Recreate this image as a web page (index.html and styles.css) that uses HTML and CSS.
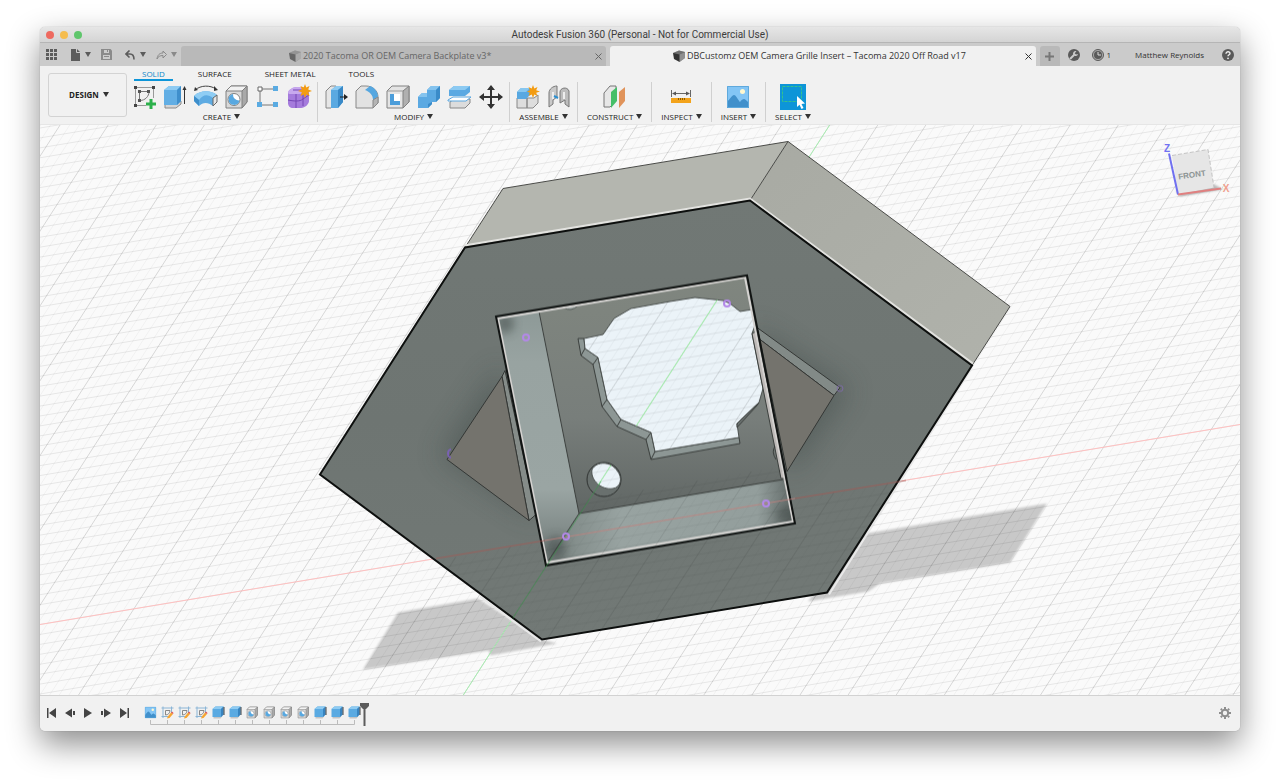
FILE: index.html
```
<!DOCTYPE html>
<html lang="en">
<head>
    <meta charset="UTF-8">
    <meta name="viewport" content="width=device-width, initial-scale=1.0">
    <title>Autodesk Fusion 360</title>
    <link rel="stylesheet" href="styles.css">
</head>
<body>
    <!-- shared icons -->
    <svg class="sprite" aria-hidden="true">
        <symbol id="i-extrude" viewBox="0 0 26 26">
            <path d="M3 20l5-3h11l0 3-5 4H3z" fill="#d5d5d5" stroke="#8a8a8a"/>
            <path d="M2 6l5-4h12v15l-4 4H2z" fill="#62aee4"/>
            <path d="M2 6l5-4h12l-4 4z" fill="#8ecbf2"/>
            <path d="M15 6l4-4v15l-4 4z" fill="#3f8fcc"/>
            <path d="M22.500 3v17" stroke="#333" fill="none"/>
            <path d="M20.500 6l2-4 2 4z" fill="#333"/>
        </symbol>
        <symbol id="i-solid" viewBox="0 0 26 26">
            <path d="M3 20h14l4-3v3l-4 5H3z" fill="#c4c4c4"/>
            <path d="M1 6l6-5h16v16l-5 5H1z" fill="#5aaae2"/>
            <path d="M1 6l6-5h16l-5 5z" fill="#8ecbf2"/>
            <path d="M18 6l5-5v16l-5 5z" fill="#3884c0"/>
            <path d="M24 2v16" stroke="#444" stroke-width="2"/>
        </symbol>
        <symbol id="i-hole" viewBox="0 0 26 26">
            <path d="M2 7l5-5h16v16l-5 6H2z" fill="#d9d9d9" stroke="#808080"/>
            <path d="M2 7l5-5h16l-5 5z" fill="#f2f2f2" stroke="#808080"/>
            <path d="M18 7l5-5v16l-5 6z" fill="#a9a9a9" stroke="#808080"/>
            <circle cx="10" cy="15.500" r="6" fill="#fff" stroke="#808080"/>
            <path d="M9 10a5.500 5.500 0 1 0 6.500 6.500A6 6 0 0 1 9 10z" fill="#58a8e0"/>
        </symbol>
        <symbol id="i-image" viewBox="0 0 26 26">
            <path d="M2 2h22v22H2z" fill="#83c5f5"/>
            <circle cx="17.500" cy="7.500" r="2.500" fill="#fff8d0"/>
            <path d="M2 18c3-3 5-7 7-7s4 5 6 7c1-2 3-3 4-3s3 2 5 4v5H2z" fill="#4190cb"/>
            <path d="M2.500 2.500h21v21h-21z" fill="none" stroke="#5fa9dc"/>
        </symbol>
        <symbol id="i-sketch" viewBox="0 0 26 26">
            <path d="M4 1v23M21 1v13M1 4h24M1 21h13" stroke="#8bb5d6" stroke-width="2" fill="none"/>
            <path d="M9 9h9c0 5-4 9-9 9z" fill="none" stroke="#888" stroke-width="2"/>
            <path d="M13 22l7-9 4 3-7 8-5 1z" fill="#f6a531"/>
            <path d="M20 13l2-2 3 3-1 2z" fill="#e04f4f"/>
        </symbol>
        <symbol id="i-cube" viewBox="0 0 12 12">
            <path d="M0 3l6-2.500L12 2v6l-5.500 4L1 9z" fill="currentColor"/>
            <path d="M0 3l6-2.500L12 2 6.500 4.500z" fill="#fff" opacity=".3"/>
            <path d="M6.500 4.500L12 2v6l-5.500 4z" fill="#fff" opacity=".45"/>
        </symbol>
    </svg>

    <div class="window">
        <header class="titlebar">
            <span class="light red"></span>
            <span class="light yellow"></span>
            <span class="light green"></span>
            <h1>Autodesk Fusion 360 (Personal - Not for Commercial Use)</h1>
        </header>

        <div class="appbar">
            <div class="quick">
                <button aria-label="Data panel"><svg width="11" height="11" viewBox="0 0 11 11" fill="#5c5c5c"><path d="M0 0h3v3H0zM4 0h3v3H4zM8 0h3v3H8zM0 4h3v3H0zM4 4h3v3H4zM8 4h3v3H8zM0 8h3v3H0zM4 8h3v3H4zM8 8h3v3H8z"/></svg></button>
                <button class="has-caret" aria-label="File"><svg width="11" height="12" viewBox="0 0 11 12"><path d="M1 0h6l3 3v9H1z" fill="#5c5c5c"/><path d="M6.500 0v3.500H10" fill="none" stroke="#cbcbcb"/></svg><i class="caret"></i></button>
                <button class="dim" aria-label="Save"><svg width="11" height="11" viewBox="0 0 11 11"><path d="M0 0h9.500L11 1.500V11H0z" fill="#8a8a8a"/><path d="M3 1h5v3H3zM2 6h7v4H2z" fill="#cbcbcb"/><path d="M6 1h1v2H6zM3 7h5v1H3z" fill="#8a8a8a"/></svg></button>
                <button class="has-caret" aria-label="Undo"><svg width="11" height="10" viewBox="0 0 11 10"><path d="M4.500.5L1 4l3.500 3.500M1 4h4c3 0 4 2 4 5.500" fill="none" stroke="#5c5c5c" stroke-width="1.600"/></svg><i class="caret"></i></button>
                <button class="has-caret dim" aria-label="Redo"><svg width="11" height="10" viewBox="0 0 11 10"><path d="M7 1v2C3.500 3 1.500 5 1 9c1-2.500 3-3.500 6-3.500V8l3.500-3.500z" fill="none" stroke="#8a8a8a"/></svg><i class="caret"></i></button>
            </div>
            <div class="doc-tab">
                <button class="doc-name"><svg width="12" height="12"><use href="#i-cube"/></svg>2020 Tacoma OR OEM Camera Backplate v3*</button>
                <button class="close" aria-label="Close"><svg width="7" height="7" viewBox="0 0 7 7"><path d="M.5.5l6 6M6.500.5l-6 6" stroke="currentColor"/></svg></button>
            </div>
            <div class="doc-tab active">
                <button class="doc-name"><svg width="12" height="12"><use href="#i-cube"/></svg>DBCustomz OEM Camera Grille Insert – Tacoma 2020 Off Road v17</button>
                <button class="close" aria-label="Close"><svg width="7" height="7" viewBox="0 0 7 7"><path d="M.5.5l6 6M6.500.5l-6 6" stroke="currentColor"/></svg></button>
            </div>
            <button class="new-tab" aria-label="New tab"><svg width="9" height="9" viewBox="0 0 9 9"><path d="M4.500 0v9M0 4.500h9" stroke="#777" stroke-width="2"/></svg></button>
            <div class="account">
                <button aria-label="Extensions"><svg width="12" height="12" viewBox="0 0 12 12"><circle cx="6" cy="6" r="6" fill="#5a5a5a"/><path d="M2 10l4-4" stroke="#cbcbcb" stroke-width="2"/><path d="M8.500 2.200A2.500 2.500 0 1 0 10 5L8 5.500 6.700 4.300z" fill="#cbcbcb"/></svg></button>
                <button class="jobs" aria-label="Job status"><svg width="12" height="12" viewBox="0 0 12 12"><circle cx="6" cy="6" r="5.500" fill="#aaa" stroke="#5a5a5a"/><circle cx="6" cy="6" r="4" fill="#5a5a5a"/><path d="M6 3v3h3" stroke="#ddd" fill="none"/></svg>1</button>
                <button class="user">Matthew Reynolds</button>
                <button aria-label="Help"><svg width="12" height="12" viewBox="0 0 12 12"><circle cx="6" cy="6" r="6" fill="#5a5a5a"/><path d="M4 4.700C4 2 8.200 2.200 8 4.600 7.900 5.800 6 5.800 6 7.300" stroke="#eee" stroke-width="1.400" fill="none"/><circle cx="6" cy="9.300" r=".9" fill="#eee"/></svg></button>
            </div>
        </div>

        <div class="ribbon">
            <button class="workspace">DESIGN <i class="caret"></i></button>
            <div class="ribbon-main">
                <nav class="ribbon-tabs">
                    <button class="current">SOLID</button>
                    <button>SURFACE</button>
                    <button>SHEET METAL</button>
                    <button>TOOLS</button>
                </nav>
                <div class="groups">
                    <div class="group">
                        <div class="tools">
                            <button aria-label="Create sketch"><svg viewBox="0 0 26 26"><path d="M4.500 3v19M3 3.500h19M22.500 3v11M3 21.500h12" stroke="#999" fill="none"/><path d="M3 2h3v3H3zM21 2h3v3h-3zM3 20h3v3H3z" fill="#444"/><path d="M8.500 7v10M8 7.500h10c0 5-4 9-9 9" stroke="#777" fill="none"/><path d="M7 6h3v3H7zM16 6h3v3h-3zM7 15h3v3H7z" fill="#555"/><path d="M20 15v10M15 20h10" stroke="#2cb04b" stroke-width="3"/></svg></button>
                            <button aria-label="Extrude"><svg viewBox="0 0 26 26"><use href="#i-extrude"/></svg></button>
                            <button aria-label="Revolve"><svg viewBox="0 0 26 26"><path d="M2 6c6-5 15-5 21-1" stroke="#444" fill="none"/><path d="M1 7l1-4 3 3zM21 2l4 4-4 1z" fill="#333"/><path d="M1 12c6-6 17-6 23-1l-4 11c-5-4-10-4-14 0l-5-5z" fill="#5eabe2"/><path d="M1 12c6-6 17-6 23-1l-4 3c-5-4-10-4-14 2z" fill="#8fcdf4"/><path d="M20 14l4-3v7l-4 4z" fill="#e5e5e5" stroke="#666"/><path d="M1 12l5 4v6l-5-5z" fill="#3d8ecb"/></svg></button>
                            <button aria-label="Hole"><svg viewBox="0 0 26 26"><use href="#i-hole"/></svg></button>
                            <button aria-label="Rectangular pattern"><svg viewBox="0 0 26 26"><path d="M5 7v12M7 5h12M7 21h12" stroke="#777" fill="none"/><path d="M3 3h4v4H3z" fill="#fff" stroke="#666"/><path d="M18 2h5v5h-5zM2 18h5v5H2zM18 18h5v5h-5z" fill="#5aabe2"/></svg></button>
                            <button aria-label="Create form"><svg viewBox="0 0 26 26"><path d="M2 9c0-3 5-6 9-6h7c3 1 5 3 5 6v8c0 3-4 7-8 7H7c-3 0-5-2-5-5z" fill="#a57bdc"/><path d="M2 9c0-3 5-6 9-6h7c3 1 4 2 3 4-2 2-5 3-8 3H6c-2 0-4 0-4-1z" fill="#c7a8ee"/><path d="M10 10v14M2 16c5 1 12 2 15-1l6-4M17 9v13M7 6h11" stroke="#7446b4" fill="none"/><path d="M19 0l1.300 3.500L23.500 2l-1.300 3.500L26 7l-3.700 1.300L23.500 12l-3.200-1.500L19 14l-1.300-3.500L14.500 12l1.300-3.700L12 7l3.800-1.500L14.500 2l3.200 1.500z" fill="#f39c12"/></svg></button>
                        </div>
                        <button class="group-name">CREATE <i class="caret"></i></button>
                    </div>
                    <div class="group">
                        <div class="tools">
                            <button aria-label="Press pull"><svg viewBox="0 0 26 26"><path d="M3 7l5-5h5v17l-5 5H3z" fill="#e6e6e6" stroke="#888"/><path d="M8 6l5-4h7v16l-5 6H8z" fill="#5aa9e1"/><path d="M8 6l5-4h7l-5 4z" fill="#8ecbf2"/><path d="M15 6l5-4v16l-5 6z" fill="#3989c7"/><path d="M17 13h6" stroke="#222"/><path d="M21 10l4 3-4 3z" fill="#222"/></svg></button>
                            <button aria-label="Fillet"><svg viewBox="0 0 26 26"><path d="M2 7l5-5h5c7 0 12 5 12 11v6l-5 5H2z" fill="#e2e2e2" stroke="#888"/><path d="M11 6l5-4c5 2 8 6 8 11l-5 3c0-5-3-8-8-10z" fill="#56a7e0"/><path d="M19 16l5-3v6l-5 5z" fill="#b5b5b5" stroke="#888"/></svg></button>
                            <button aria-label="Shell"><svg viewBox="0 0 26 26"><path d="M2 7l5-5h17v16l-6 6H2z" fill="#e4e4e4" stroke="#808080"/><path d="M18 7l6-5v16l-6 6z" fill="#b0b0b0" stroke="#808080"/><path d="M2 7h16" stroke="#999"/><path d="M5 10h10v11H5z" fill="#4b9dda"/><path d="M9 10h6v7H9z" fill="#fff"/></svg></button>
                            <button aria-label="Combine"><svg viewBox="0 0 26 26"><path d="M2 13l4-4h5V6l4-4h9v12l-4 4h-4v2l-4 4H2z" fill="#5ba9e2"/><path d="M11 6l4-4h9l-4 4zM2 13l4-4h5v4z" fill="#84c3ee"/><path d="M20 6l4-4v12l-4 4zM12 24l4-4v-2l-4 2z" fill="#3a8bc9"/></svg></button>
                            <button aria-label="Split body"><svg viewBox="0 0 26 26"><path d="M3 18l4-3h16v4l-5 5H3z" fill="#dcdcdc" stroke="#888"/><path d="M2 6l5-4h16v6l-5 4H2z" fill="#5ba9e2"/><path d="M2 6l5-4h16l-5 4z" fill="#8ccaf2"/><path d="M1 16l5-3h18l-5 4H1z" fill="#fff" stroke="#59a6df"/></svg></button>
                            <button aria-label="Move"><svg viewBox="0 0 26 26"><path d="M13 4v18M4 13h18" stroke="#333" stroke-width="2"/><path d="M13 1l4 5H9zM13 25l4-5H9zM1 13l5-4v8zM25 13l-5-4v8z" fill="#333"/></svg></button>
                        </div>
                        <button class="group-name">MODIFY <i class="caret"></i></button>
                    </div>
                    <div class="group">
                        <div class="tools">
                            <button aria-label="New component"><svg viewBox="0 0 26 26"><path d="M2 14h10v10H2zM12 14h7l4-3v8l-5 5h-6z" fill="#ddd" stroke="#888"/><path d="M2 8l4-4h9v7l-4 4H2z" fill="#58a8e1"/><path d="M2 8l4-4h9l-4 4z" fill="#87c7f0"/><path d="M18 1l1.300 3.500L22.500 3l-1.300 3.300L25 7.500l-3.800 1.300L22.500 12l-3.200-1.500L18 14l-1.300-3.500L13.500 12l1.300-3.200L12 7.500l2.800-1.200L13.500 3l3.200 1.500z" fill="#f39c12"/></svg></button>
                            <button aria-label="Joint"><svg viewBox="0 0 26 26"><path d="M3 9c0-4 4-7 8-7v11l-4 3v4l-4 3z" fill="#c9c9c9" stroke="#777"/><path d="M7 8v7" stroke="#eee" stroke-width="2"/><path d="M23 7v16l-4-3v-4l-5 3V8c0-4 7-6 9-1z" fill="#bdbdbd" stroke="#777"/><path d="M18 8v7" stroke="#eee" stroke-width="2"/><path d="M8 12l4 2" stroke="#2b8fd0" stroke-width="2"/></svg></button>
                        </div>
                        <button class="group-name">ASSEMBLE <i class="caret"></i></button>
                    </div>
                    <div class="group">
                        <div class="tools">
                            <button aria-label="Offset plane"><svg viewBox="0 0 26 26"><path d="M2 9l6-7h6v15l-6 6H2z" fill="#e7e7e7" stroke="#777"/><path d="M9 8l6-5v14l-6 7z" fill="#45bf68"/><path d="M17 8l6-5v14l-6 7z" fill="#e0935a"/></svg></button>
                        </div>
                        <button class="group-name">CONSTRUCT <i class="caret"></i></button>
                    </div>
                    <div class="group">
                        <div class="tools">
                            <button aria-label="Measure"><svg viewBox="0 0 26 26"><path d="M3.500 6v7M22.500 6v7M5 9.500h16" stroke="#666"/><path d="M4 9.500l4-2v4zM22 9.500l-4-2v4z" fill="#555"/><path d="M3 14h20v5H3z" fill="#f3a31b"/><path d="M10.500 14v2M12.500 14v2M14.500 14v2M16.500 14v2" stroke="#8d5b00"/></svg></button>
                        </div>
                        <button class="group-name">INSPECT <i class="caret"></i></button>
                    </div>
                    <div class="group">
                        <div class="tools">
                            <button aria-label="Insert image"><svg viewBox="0 0 26 26"><use href="#i-image"/></svg></button>
                        </div>
                        <button class="group-name">INSERT <i class="caret"></i></button>
                    </div>
                    <div class="group">
                        <div class="tools">
                            <button class="picked" aria-label="Select"><svg viewBox="0 0 26 26"><path d="M2.500 2.500h19v15h-19z" fill="none" stroke="#35c28c" stroke-dasharray="3 1"/><path d="M17 12v11l2.500-2.300 2 4.300 2-1-2-4 3.500-.5z" fill="#fff"/></svg></button>
                        </div>
                        <button class="group-name">SELECT <i class="caret"></i></button>
                    </div>
                </div>
            </div>
        </div>

        <main class="viewport">
            <svg class="scene" viewBox="40 124 1200 571" preserveAspectRatio="xMidYMid slice" role="img" aria-label="Grille insert model">
                <defs>
                    <linearGradient id="g-front" x1="0" y1="0" x2="0" y2="1">
                        <stop offset="0" stop-color="#717875"/>
                        <stop offset=".5" stop-color="#6e7572"/>
                        <stop offset="1" stop-color="#727976"/>
                    </linearGradient>
                    <linearGradient id="g-side" x1="0" y1="0" x2="1" y2="1">
                        <stop offset="0" stop-color="#a8aaa3"/>
                        <stop offset="1" stop-color="#b0b2ab"/>
                    </linearGradient>
                    <linearGradient id="g-left" x1="0" y1="0" x2="0" y2="1">
                        <stop offset="0" stop-color="#8d9997"/>
                        <stop offset=".2" stop-color="#98a3a1"/>
                        <stop offset=".7" stop-color="#9aa5a3"/>
                        <stop offset="1" stop-color="#6d7674"/>
                    </linearGradient>
                    <linearGradient id="g-bottom" x1="0" y1="0" x2="1" y2="0">
                        <stop offset="0" stop-color="#78827f"/>
                        <stop offset=".3" stop-color="#98a3a1"/>
                        <stop offset=".85" stop-color="#939e9c"/>
                        <stop offset="1" stop-color="#5e6664"/>
                    </linearGradient>
                    <linearGradient id="g-back" x1="0" y1="0" x2="0" y2="1">
                        <stop offset="0" stop-color="#80867f"/>
                        <stop offset=".6" stop-color="#787e7b"/>
                        <stop offset="1" stop-color="#606664"/>
                    </linearGradient>
                    <filter id="soft" x="-20%" y="-20%" width="140%" height="140%"><feGaussianBlur stdDeviation="14"/></filter>
                    <filter id="soft-small" x="-50%" y="-50%" width="200%" height="200%"><feGaussianBlur stdDeviation="5"/></filter>
                    <filter id="soft-edge"><feGaussianBlur stdDeviation="1.200"/></filter>
                    <clipPath id="c-front"><path d="M465 247L750 200 972 365 827 592 542 639 320 474z"/></clipPath>
                    <clipPath id="c-square"><path d="M496 316L747 275 795 523 546 565z"/></clipPath>
                    <clipPath id="c-low"><path d="M436 560L579 534 579 500 781 466 795 499 906 480 827 592 542 639z"/></clipPath>
                    <clipPath id="c-window"><path id="p-window" d="M584 338L603 334 614 318 631 308 670 301 695 297 723 300 730 303 740 311 752 309 755 325 752 333 763 388 759 402 737 423 739 437 655 451 651 432 621 419 607 399 598 357 585 348zM592 469C597 460 611 461 617 470 623 477 621 487 613 488 602 490 590 480 592 469z"/></clipPath>
                    <g id="grid">
                        <path id="grid-minor" stroke="#000" stroke-opacity=".04" fill="none"/>
                        <path id="grid-rows" stroke="#000" stroke-opacity=".08" fill="none"/>
                        <path id="grid-major" stroke="#000" stroke-opacity=".14" fill="none"/>
                    </g>
                </defs>

                <!-- ground -->
                <rect x="40" y="124" width="1200" height="571" fill="#fafafa"/>
                <g fill="#c8c8c8" filter="url(#soft-edge)">
                    <path d="M398 612L478 598 542 639 557 643 490 655 489 650 363 669z"/>
                    <path d="M860 534L1047 503 1010 562 880 583 868 591 808 601z"/>
                </g>
                <use href="#grid"/>
                <path d="M40 624L1240 424" stroke="#ffc0c0"/>
                <path d="M830 124L463 695" stroke="#a9efb2"/>

                <!-- outer body -->
                <path d="M465 247L503 188 788 141 750 200z" fill="#b4b6af"/>
                <path d="M750 200L788 141 1010 306 972 365z" fill="url(#g-side)"/>
                <path d="M465 247L503 188 788 141 1010 306 972 365M788 141L750 200" fill="none" stroke="#4a4b48"/>
                <path d="M465 247L750 200 972 365 827 592 542 639 320 474z" fill="url(#g-front)"/>
                <g clip-path="url(#c-front)">
                    <path d="M440 455L500 365 540 520zM750 325L850 388 790 475z" fill="#3d4846" opacity=".45" filter="url(#soft)"/>
                </g>
                <path d="M464 245L750 198 973 363" fill="none" stroke="#e2e2df" stroke-width="2"/>
                <path d="M972 367L829 594M480 596L541 641" fill="none" stroke="#e8e8e8" stroke-width="2"/>
                <path d="M465 247L750 200 972 365 827 592 542 639 320 474z" fill="none" stroke="#0d0f0e" stroke-width="2"/>

                <!-- side pockets -->
                <g stroke="#343735" stroke-linejoin="round">
                    <path d="M502 376L505 370 536 514 529 520z" fill="#858c89"/>
                    <path d="M447 459L502 376 529 520z" fill="#74736d"/>
                    <path d="M757 327L840 387 834 395 760 339z" fill="#828a87"/>
                    <path d="M760 339L834 395 787 471z" fill="#74736d"/>
                </g>

                <!-- square cavity -->
                <path d="M539 312L747 275 783 479 579 513z" fill="url(#g-back)"/>
                <path d="M496 316L539 310 579 513 546 565z" fill="url(#g-left)"/>
                <path d="M546 565L579 513 783 479 795 523z" fill="url(#g-bottom)"/>
                <g clip-path="url(#c-square)" fill="#454e4c" opacity=".6">
                    <ellipse cx="505" cy="323" rx="9" ry="10" filter="url(#soft-small)"/>
                    <ellipse cx="788" cy="514" rx="12" ry="8" filter="url(#soft-small)"/>
                    <ellipse cx="556" cy="548" rx="10" ry="12" filter="url(#soft-small)"/>
                </g>
                <path d="M539 311L579 513 783 479M579 513L546 564" fill="none" stroke="#3c403e"/>
                <path d="M564 307q7 5 14-2z" fill="#a8b2b0" stroke="#555b58"/>
                <path d="M578 338L584 338 585 348 598 357 607 399 621 419 651 432 655 451 739 437 740 443 651 459 646 439 617 426 602 406 593 364 581 355z" fill="#8d9795" stroke="#3a3e3c"/>
                <path d="M585 348L581 355M598 357L593 364M607 399L602 406M621 419L617 426M651 432L646 439M655 451L651 459" stroke="#3a3e3c"/>
                <circle cx="604" cy="479" r="17" fill="#69706e" stroke="#2e3130"/>
                <use href="#p-window" fill="#ebf3f8" stroke="#4b504e"/>
                <path d="M759 402L737 423 737 427 757 405z" fill="#6d7472" stroke="#3a3e3c"/>
                <g clip-path="url(#c-window)">
                    <use href="#grid"/>
                    <path d="M830 124L463 695" stroke="#9df0a4"/>
                </g>
                <path d="M752 333L756 331 787 478 781 478z" fill="#bdb9b7" stroke="#3a3e3c"/>
                <path d="M775 446q-4 5 1 13" fill="none" stroke="#3a3e3c"/>
                <path d="M498 318L745 277 793 521 547 562z" fill="none" stroke="#d5d3d1" stroke-width="2"/>
                <path d="M496 316L747 275 795 523 546 565z" fill="none" stroke="#111413" stroke-width="2"/>

                <!-- grid and axes seen through the body -->
                <g clip-path="url(#c-low)"><use href="#grid" opacity=".7"/></g>
                <path d="M436 558L545 540M795 498L906 480" stroke="#a45a55" opacity=".8"/>
                <path d="M545 540L795 498" stroke="#c88480" opacity=".8"/>
                <path d="M601 481L499 639" stroke="#3b9a4c" opacity=".6" clip-path="url(#c-front)"/>

                <g fill="none" stroke="#b388e8" stroke-width="2">
                    <circle cx="526" cy="337" r="3"/>
                    <circle cx="566" cy="536" r="3"/>
                    <circle cx="727" cy="303" r="3"/>
                    <circle cx="766" cy="503" r="3"/>
                    <path d="M451 449a3 4 0 0 0 0 8" stroke="#7a62b4"/>
                    <circle cx="840" cy="388" r="3" stroke="#7e6ca5" stroke-width="1"/>
                </g>

                <!-- view cube -->
                <path d="M1176 190l38-6 4 2 4 3-42 7z" fill="#777" opacity=".5" filter="url(#soft-edge)"/>
                <path d="M1172 155L1208 149 1214 187 1178 194z" fill="#e6e6e6"/>
                <path d="M1172 155L1208 149 1214 187" fill="none" stroke="#c4c4c4" stroke-dasharray="4 2"/>
                <path d="M1169 153L1178 194" stroke="#7070f0" stroke-width="2"/>
                <path d="M1178 194L1221 188" stroke="#e08080" stroke-width="2"/>
                <text x="1192" y="177" class="cube-face" text-anchor="middle" transform="rotate(-8 1192 174)">FRONT</text>
                <text x="1167" y="151" class="axis axis-z" text-anchor="middle">Z</text>
                <text x="1226" y="191" class="axis axis-x" text-anchor="middle">X</text>
            </svg>
        </main>

        <footer class="timeline">
            <div class="playback">
                <button aria-label="Go to start"><svg viewBox="0 0 10 10"><path d="M0 0h1.500v10H0zM9 0v10L2 5z"/></svg></button>
                <button aria-label="Step back"><svg viewBox="0 0 10 10"><path d="M7 .5v9L0 5zM8 3h2v4H8z"/></svg></button>
                <button aria-label="Play"><svg viewBox="0 0 10 10"><path d="M1 0l8 5-8 5z"/></svg></button>
                <button aria-label="Step forward"><svg viewBox="0 0 10 10"><path d="M3 .5v9L10 5zM0 3h2v4H0z"/></svg></button>
                <button aria-label="Go to end"><svg viewBox="0 0 10 10"><path d="M8.500 0H10v10H8.500zM1 0v10l7-5z"/></svg></button>
            </div>
            <div class="history">
                <div class="features">
                    <svg viewBox="0 0 26 26"><use href="#i-image"/></svg>
                    <svg viewBox="0 0 26 26"><use href="#i-sketch"/></svg>
                    <svg viewBox="0 0 26 26"><use href="#i-sketch"/></svg>
                    <svg viewBox="0 0 26 26"><use href="#i-sketch"/></svg>
                    <svg viewBox="0 0 26 26"><use href="#i-solid"/></svg>
                    <svg viewBox="0 0 26 26"><use href="#i-solid"/></svg>
                    <svg viewBox="0 0 26 26"><use href="#i-hole"/></svg>
                    <svg viewBox="0 0 26 26"><use href="#i-hole"/></svg>
                    <svg viewBox="0 0 26 26"><use href="#i-hole"/></svg>
                    <svg viewBox="0 0 26 26"><use href="#i-hole"/></svg>
                    <svg viewBox="0 0 26 26"><use href="#i-solid"/></svg>
                    <svg viewBox="0 0 26 26"><use href="#i-solid"/></svg>
                    <svg viewBox="0 0 26 26"><use href="#i-solid"/></svg>
                </div>
                <svg class="bracket" viewBox="0 0 217 5"><path d="M6.500 0v4.500h204V0M23.500 0v4M40.500 0v4M57.500 0v4M74.500 0v4M91.500 0v4M108.500 0v4M125.500 0v4M142.500 0v4M159.500 0v4M176.500 0v4M193.500 0v4" fill="none" stroke="#bcbcbc"/></svg>
            </div>
            <svg class="marker" viewBox="0 0 9 23"><path d="M0 0h9v3L6 6H5.500v17h-2V6H3L0 3z" fill="#5c5c5c"/></svg>
            <button class="settings" aria-label="Settings"><svg width="12" height="12" viewBox="0 0 12 12"><circle cx="6" cy="6" r="3.200" fill="none" stroke="#8e8e8e" stroke-width="2"/><path d="M6 0v2M6 10v2M0 6h2M10 6h2M1.800 1.800l1.300 1.300M8.900 8.900l1.300 1.300M1.800 10.200l1.300-1.300M8.900 3.100l1.300-1.300" stroke="#8e8e8e" stroke-width="2"/></svg></button>
        </footer>
    </div>
    <script src="grid.js"></script>
</body>
</html>
```
FILE: styles.css
```
* {
    box-sizing: border-box;
}

body {
    margin: 0;
    padding: 27px 40px 53px;
    background-color: #fff;
    font-family: "Open Sans", "Noto Sans", sans-serif;
    font-size: 8px;
    color: #222;
}

button {
    padding: 0;
    border: none;
    background: none;
    font: inherit;
    color: inherit;
    cursor: pointer;
    display: flex;
    align-items: center;
    justify-content: center;
    white-space: nowrap;
}

svg {
    display: block;
}

.sprite {
    position: absolute;
    width: 0;
    height: 0;
}

.window {
    display: flex;
    flex-direction: column;
    min-height: calc(100vh - 80px);
    border-radius: 5px;
    overflow: hidden;
    background-color: #f1f1f1;
    box-shadow: 0 0 1px rgba(0, 0, 0, 0.4), 0 13px 32px rgba(0, 0, 0, 0.45);
}

.caret {
    display: inline-block;
    flex: none;
    border: 3px solid transparent;
    border-top: 5px solid #333;
    border-bottom: none;
}

/* title bar */
.titlebar {
    display: flex;
    align-items: center;
    gap: 6px;
    height: 16px;
    padding: 0 6px;
    background: linear-gradient(#e6e6e6, #d4d4d4);
    border-bottom: 1px solid #b5b5b5;
}

.light {
    width: 8px;
    height: 8px;
    border-radius: 50%;
}

.red { background-color: #ee6a5f; }
.yellow { background-color: #f5bd4f; }
.green { background-color: #5fc66c; }

.titlebar h1 {
    flex: 1;
    margin: 0 42px 0 0;
    font-family: Roboto, sans-serif;
    font-size: 10px;
    font-weight: normal;
    line-height: 15px;
    text-align: center;
    color: #3c3c3c;
}

/* quick access and document tabs */
.appbar {
    display: flex;
    align-items: flex-end;
    gap: 4px;
    height: 23px;
    background-color: #cbcbcb;
    color: #333;
}

.quick,
.account {
    display: flex;
    align-items: center;
    height: 23px;
}

.quick {
    gap: 13px;
    width: 137px;
    padding-left: 6px;
}

.quick .has-caret {
    gap: 4px;
    margin-right: -3px;
}

.quick .caret { border-top-color: #5c5c5c; }
.quick .dim .caret { border-top-color: #8a8a8a; }

.doc-tab {
    flex: 1;
    display: flex;
    align-items: center;
    height: 20px;
    padding: 0 4px;
    border-radius: 3px 3px 0 0;
    background-color: #b9b9b9;
    color: #666;
    font-size: 9px;
    line-height: 12px;
}

.doc-tab.active {
    background-color: #f1f1f1;
    color: #333;
}

.doc-name {
    flex: 1;
    gap: 2px;
}

.new-tab {
    width: 20px;
    height: 20px;
    border-radius: 3px 3px 0 0;
    background-color: #b9b9b9;
}

.account {
    gap: 12px;
    padding: 0 6px 0 4px;
}

.account .jobs { gap: 3px; }
.account .user { margin: 0 6px 0 12px; }

/* ribbon */
.ribbon {
    display: flex;
    gap: 4px;
    height: 58px;
    padding: 0 8px;
    background-color: #f1f1f1;
}

.workspace {
    gap: 4px;
    width: 79px;
    height: 44px;
    margin-top: 7px;
    padding: 0 0 2px 3px;
    border: 1px solid #d3d3d3;
    border-radius: 3px;
    font-weight: bold;
}

.ribbon-tabs {
    display: flex;
    gap: 17px;
    padding-left: 3px;
}

.ribbon-tabs button {
    height: 15px;
    padding: 1px 8px 0;
    border-bottom: 2px solid transparent;
}

.ribbon-tabs .current {
    border-bottom-color: #0d95d8;
    color: #0d86c8;
}

.groups {
    display: flex;
}

.group {
    padding: 2px 5px 0 5px;
    border-right: 1px solid #d0d0d0;
    height: 40px;
    margin-top: 1px;
}

.group:first-child { padding-left: 0; }
.group:last-child { border-right: none; }

.tools {
    display: flex;
    justify-content: center;
    gap: 5px;
}

.tools svg {
    width: 26px;
    height: 26px;
}

.picked { background-color: #0d95d8; }

.group-name {
    gap: 3px;
    width: 100%;
    height: 12px;
    padding: 0 4px;
}

/* canvas */
.viewport {
    flex: 1;
    position: relative;
    min-height: 400px;
    border-top: 1px solid #e6e6e6;
}

.scene {
    position: absolute;
    inset: 0;
    width: 100%;
    height: 100%;
}

.cube-face {
    font-size: 8px;
    font-weight: bold;
    fill: #8d9494;
    font-family: "Liberation Sans", sans-serif;
}

.axis {
    font-size: 10px;
    font-weight: bold;
    font-family: "Liberation Sans", sans-serif;
}

.axis-z { fill: #7272f2; }
.axis-x { fill: #f0a08e; }

/* timeline */
.timeline {
    display: flex;
    align-items: flex-start;
    height: 36px;
    padding: 0 9px 0 7px;
    border-top: 1px solid #d2d2d2;
    background-color: #f1f1f1;
}

.playback {
    display: flex;
    gap: 8px;
    margin-top: 12px;
}

.playback svg {
    width: 10px;
    height: 10px;
    fill: #444;
}

.history { margin: 10px 0 0 15px; }

.features {
    display: flex;
    gap: 4px;
}

.features svg {
    width: 13px;
    height: 13px;
}

.bracket {
    width: 217px;
    height: 5px;
    margin-top: 1px;
}

.marker {
    width: 9px;
    height: 23px;
    margin: 7px 0 0 -1px;
}

.settings { margin: 11px 0 0 auto; }
```
FILE: grid.js
```
// ground plane lines: columns lean left, rows rise to the right
const TOP = 124, BOTTOM = 695, LEFT = 40, RIGHT = 1240;

function column(x) {
    return `M${x} ${TOP}L${x - 367} ${BOTTOM}`;
}

function row(y) {
    return `M${LEFT} ${y}L${RIGHT} ${y - 200}`;
}

let major = "", minor = "", rows = "";

for (let i = -84; i <= 84; i++) {
    const x = 830 + i * 9.62;
    if (i % 5 === 0) {
        major += column(x);
    } else {
        minor += column(x);
    }
}

for (let i = -51; i <= 28; i++) {
    rows += row(624 + i * 9.93);
}

document.getElementById("grid-major").setAttribute("d", major);
document.getElementById("grid-minor").setAttribute("d", minor);
document.getElementById("grid-rows").setAttribute("d", rows);
```
